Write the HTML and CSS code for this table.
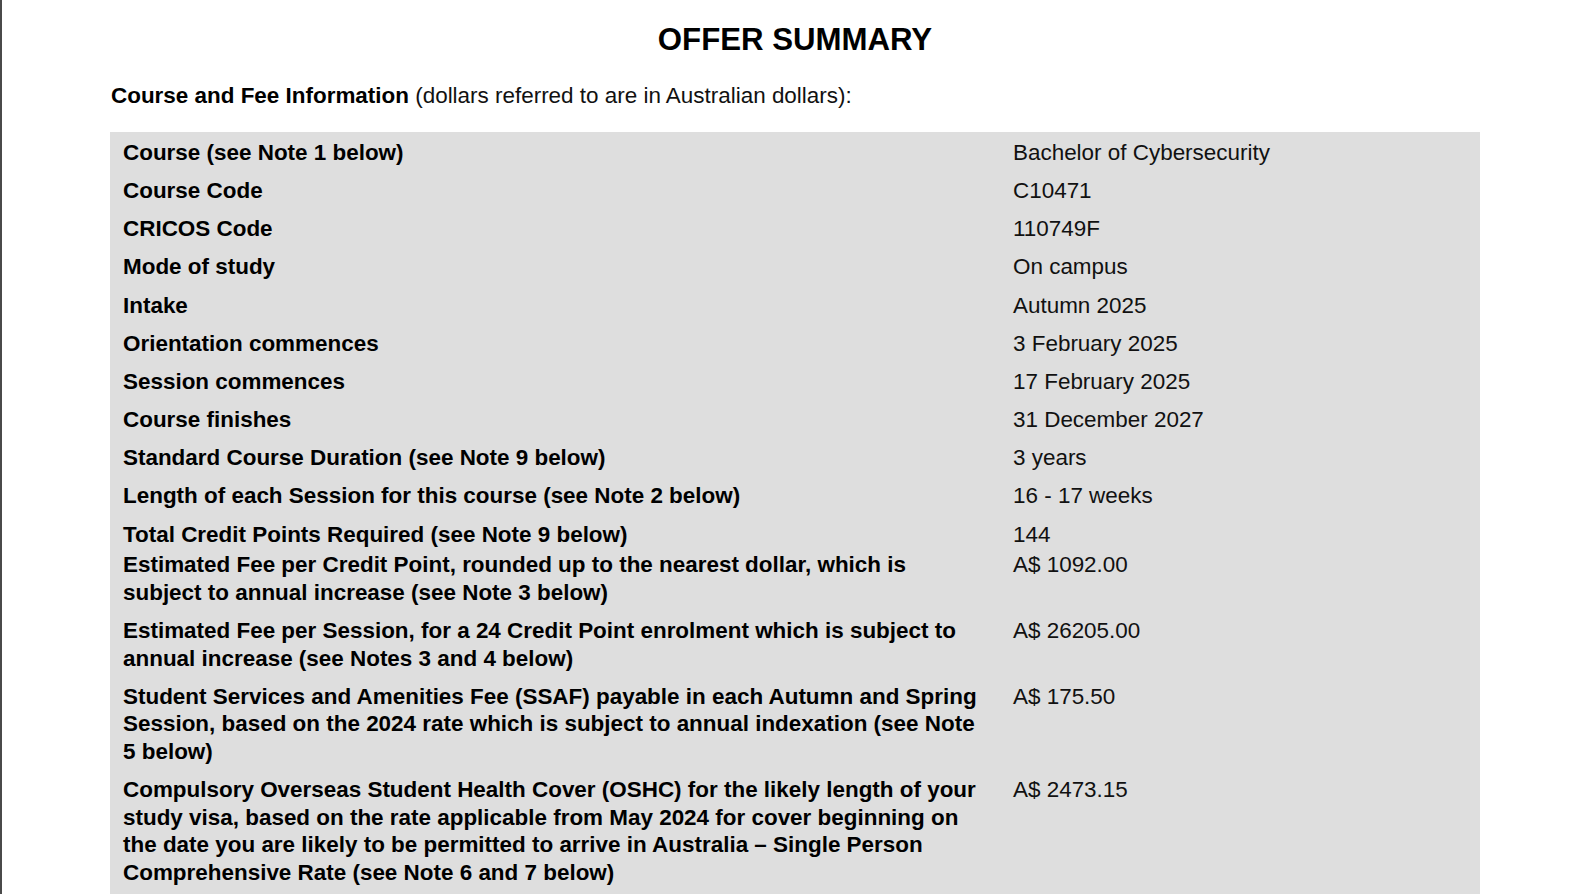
FILE: index.html
```html
<!DOCTYPE html>
<html lang="en">
<head>
<meta charset="utf-8">
<title>Offer Summary</title>
<link rel="stylesheet" href="styles.css">
</head>
<body>
<div class="page">
  <div class="content">
    <h1 class="title">OFFER SUMMARY</h1>
    <p class="intro"><strong>Course and Fee Information</strong> (dollars referred to are in Australian dollars):</p>
    <div class="table">
      <div class="row"><div class="label">Course (see Note 1 below)</div><div class="value">Bachelor of Cybersecurity</div></div>
      <div class="row"><div class="label">Course Code</div><div class="value">C10471</div></div>
      <div class="row"><div class="label">CRICOS Code</div><div class="value">110749F</div></div>
      <div class="row"><div class="label">Mode of study</div><div class="value">On campus</div></div>
      <div class="row"><div class="label">Intake</div><div class="value">Autumn 2025</div></div>
      <div class="row"><div class="label">Orientation commences</div><div class="value">3 February 2025</div></div>
      <div class="row"><div class="label">Session commences</div><div class="value">17 February 2025</div></div>
      <div class="row"><div class="label">Course finishes</div><div class="value">31 December 2027</div></div>
      <div class="row"><div class="label">Standard Course Duration (see Note 9 below)</div><div class="value">3 years</div></div>
      <div class="row"><div class="label">Length of each Session for this course (see Note 2 below)</div><div class="value">16 - 17 weeks</div></div>
      <div class="row tight-bottom"><div class="label">Total Credit Points Required (see Note 9 below)</div><div class="value">144</div></div>
      <div class="row tight-top"><div class="label">Estimated Fee per Credit Point, rounded up to the nearest dollar, which is subject to annual increase (see Note 3 below)</div><div class="value">A$ 1092.00</div></div>
      <div class="row"><div class="label">Estimated Fee per Session, for a 24 Credit Point enrolment which is subject to annual increase (see Notes 3 and 4 below)</div><div class="value">A$ 26205.00</div></div>
      <div class="row"><div class="label">Student Services and Amenities Fee (SSAF) payable in each Autumn and Spring Session, based on the 2024 rate which is subject to annual indexation (see Note 5 below)</div><div class="value">A$ 175.50</div></div>
      <div class="row"><div class="label">Compulsory Overseas Student Health Cover (OSHC) for the likely length of your study visa, based on the rate applicable from May 2024 for cover beginning on the date you are likely to be permitted to arrive in Australia – Single Person Comprehensive Rate (see Note 6 and 7 below)</div><div class="value">A$ 2473.15</div></div>
    </div>
  </div>
</div>
</body>
</html>
```

FILE: styles.css
```css
html, body {
  margin: 0;
  padding: 0;
  background: #ffffff;
}

body {
  font-family: "Liberation Sans", Arial, sans-serif;
  color: #000;
}

.page {
  border-left: 2px solid #4a4a4a;
  min-height: 100vh;
  box-sizing: border-box;
  padding-left: 108px;
  padding-right: 104px;
}

.content {
  width: 1370px;
  padding-top: 22px;
}

.title {
  margin: 0;
  font-size: 31.2px;
  line-height: 36px;
  font-weight: 700;
  text-align: center;
  color: #000;
}

.intro {
  margin: 24px 0 0 1px;
  font-size: 22.45px;
  line-height: 27px;
  color: #111;
}

.intro strong {
  font-weight: 700;
  color: #000;
}

.table {
  margin-top: 23px;
  background: #dedede;
  padding-bottom: 40px;
}

.row {
  display: grid;
  grid-template-columns: 890px 1fr;
  padding: 6.8px 0 3.8px 0;
  font-size: 22.45px;
  line-height: 27.6px;
}

.row.tight-bottom {
  padding-bottom: 3px;
}

.row.tight-top {
  padding-top: 0;
}

.label {
  padding-left: 13px;
  padding-right: 17px;
  font-weight: 700;
  color: #000;
}

.value {
  padding-left: 13px;
  color: #111;
}
```
